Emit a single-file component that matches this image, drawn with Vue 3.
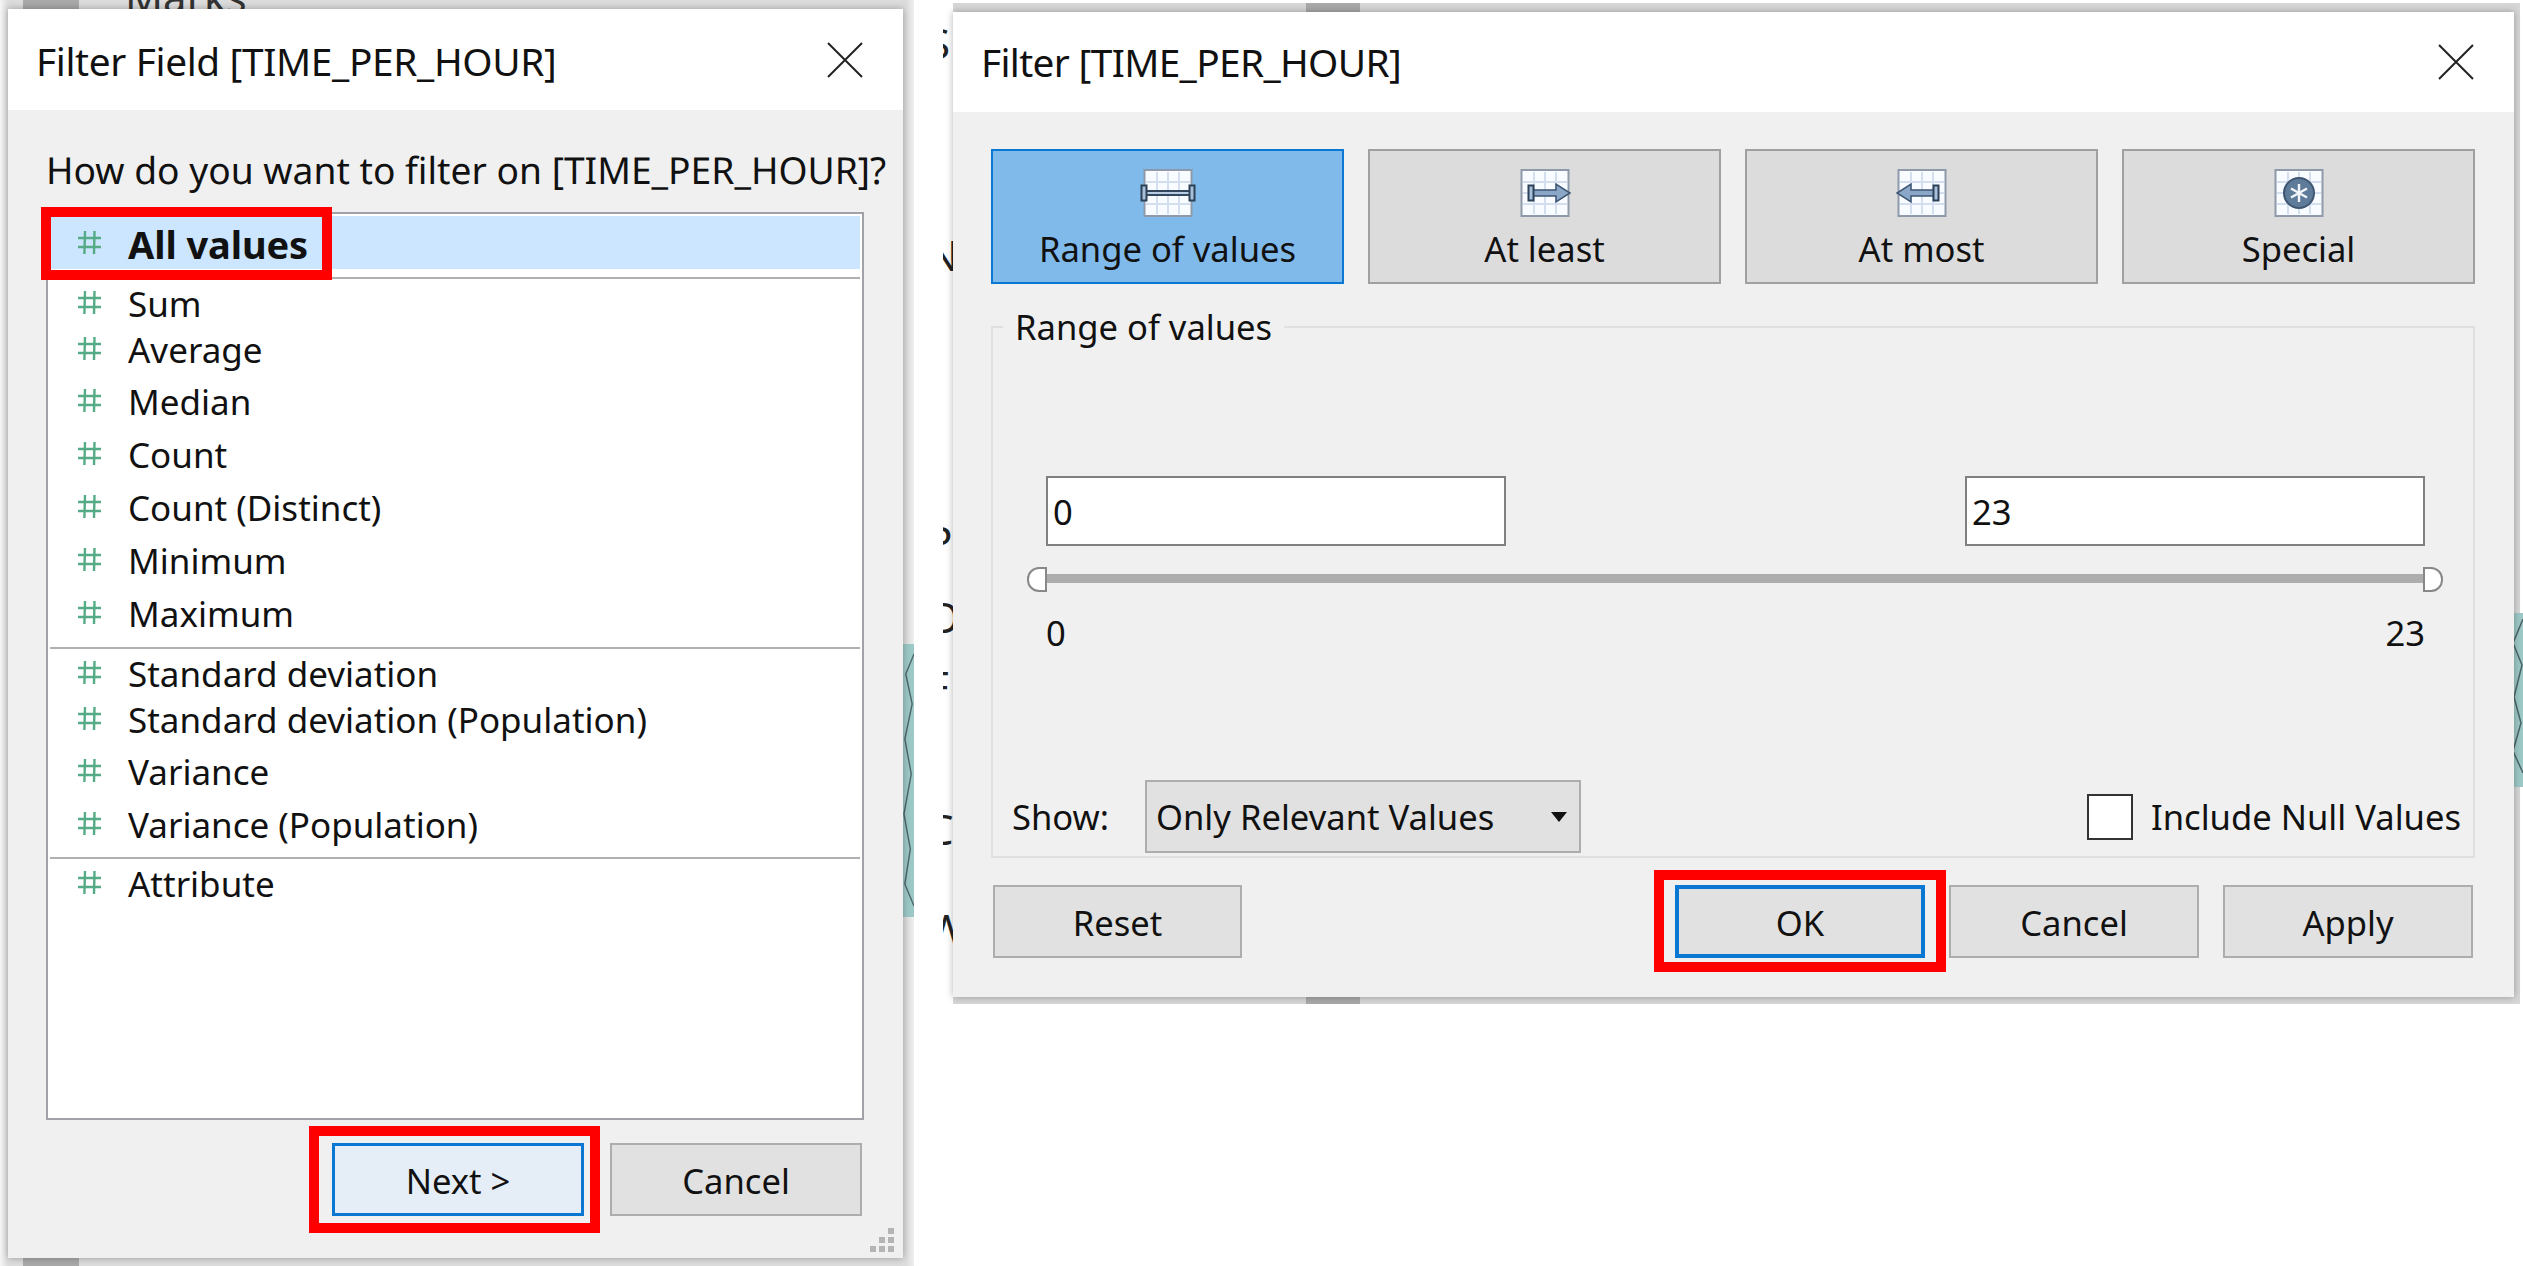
<script setup>
const grupos = [
  { clase: 'g-top', filas: [{ t: 'Sum', tight: true }, { t: 'Average', tight: true }, { t: 'Median' }, { t: 'Count' }, { t: 'Count (Distinct)' }, { t: 'Minimum' }, { t: 'Maximum' }] },
  { clase: 'g-mid', filas: [{ t: 'Standard deviation', tight: true }, { t: 'Standard deviation (Population)', tight: true }, { t: 'Variance' }, { t: 'Variance (Population)' }] },
  { clase: 'g-end', filas: [{ t: 'Attribute', tight: true }] }
]

const tabs = [
  { id: 'range', label: 'Range of values', activo: true },
  { id: 'least', label: 'At least' },
  { id: 'most', label: 'At most' },
  { id: 'special', label: 'Special' }
]

const fragmentos = [
  { t: 'S', y: 18 },
  { t: 'N', y: 230 },
  { t: 'P', y: 516 },
  { t: 'O', y: 592 },
  { t: 'F', y: 661 },
  { t: 'C', y: 804 },
  { t: 'W', y: 904 }
]
</script>

<template>
  <div class="page">
    <!-- lo que asoma detras de los dialogos -->
    <div class="backdrop">
      <div class="strip strip-left"></div>
      <div class="strip strip-right"></div>
      <div class="chip chip-a"></div>
      <div class="chip chip-b"></div>
      <div class="chip chip-c"></div>
      <div class="chip chip-d"></div>
      <div class="marks">Marks</div>
      <div class="sliver">
        <span v-for="f in fragmentos" :key="f.t" class="frag" :style="{ top: f.y + 'px' }">{{ f.t }}</span>
      </div>
      <svg class="map map-a" viewBox="0 0 12 273" preserveAspectRatio="none">
        <rect width="12" height="273" fill="#9cc8c6" />
        <path d="M12 10 3 30 10 60 2 95 9 130 1 170 8 205 2 240 12 262" stroke="#4d6468" stroke-width="1.500" fill="none" />
      </svg>
      <svg class="map map-b" viewBox="0 0 12 174" preserveAspectRatio="none">
        <rect width="12" height="174" fill="#9cc8c6" />
        <path d="M12 6 2 30 11 52 3 84 10 110 2 138 12 160" stroke="#4d6468" stroke-width="1.500" fill="none" />
      </svg>
    </div>

    <div class="dialog dialog-field">
      <header class="titlebar">
        <span class="title">Filter Field [TIME_PER_HOUR]</span>
        <svg class="close" viewBox="0 0 36 36"><path d="M1 1 35 35M35 1 1 35" stroke="#222" stroke-width="2" fill="none" /></svg>
      </header>
      <div class="field-body">
        <p class="question">How do you want to filter on [TIME_PER_HOUR]?</p>
        <div class="listbox">
          <div class="row row-selected">
            <svg class="hash" viewBox="0 0 23 23"><path d="M7 0 6.400 23M16.500 0 16 23M0 7H23M0 16H23" stroke="#55ab85" stroke-width="2.400" fill="none" /></svg>
            <b>All values</b>
          </div>
          <div v-for="g in grupos" :key="g.clase" class="group" :class="g.clase">
            <div v-for="f in g.filas" :key="f.t" class="row" :class="{ tight: f.tight }">
              <svg class="hash" viewBox="0 0 23 23"><path d="M7 0 6.400 23M16.500 0 16 23M0 7H23M0 16H23" stroke="#55ab85" stroke-width="2.400" fill="none" /></svg>
              <span>{{ f.t }}</span>
            </div>
          </div>
        </div>
        <div class="field-footer">
          <button class="btn btn-next">Next &gt;</button>
          <button class="btn btn-wide">Cancel</button>
        </div>
        <div class="grip">
          <i class="d13"></i>
          <i class="d22"></i>
          <i class="d23"></i>
          <i class="d31"></i>
          <i class="d32"></i>
          <i class="d33"></i>
        </div>
      </div>
    </div>

    <div class="dialog dialog-filter">
      <header class="titlebar titlebar-filter">
        <span class="title">Filter [TIME_PER_HOUR]</span>
        <svg class="close" viewBox="0 0 36 36"><path d="M1 1 35 35M35 1 1 35" stroke="#222" stroke-width="2" fill="none" /></svg>
      </header>
      <div class="filter-body">
        <div class="tabs">
          <div v-for="tab in tabs" :key="tab.id" class="tab" :class="{ activo: tab.activo }">
            <svg class="tab-icon" viewBox="0 0 56 48">
              <rect x="4.500" y="1" width="47" height="46" fill="#f8fbff" stroke="#8e9aaa" stroke-width="2" />
              <path d="M6 13H50M6 24H50M6 35H50M17 3V45M28 3V45M39 3V45" stroke="#d3deee" stroke-width="2" fill="none" />
              <template v-if="tab.id === 'range'">
                <path d="M6 24H50" stroke="#33475f" stroke-width="6" />
                <path d="M6 24H50" stroke="#b8cde4" stroke-width="2" />
                <rect x="1.500" y="16.500" width="5" height="15" fill="#a8c0da" stroke="#2d4158" stroke-width="2" />
                <rect x="49.500" y="16.500" width="5" height="15" fill="#a8c0da" stroke="#2d4158" stroke-width="2" />
              </template>
              <template v-else-if="tab.id === 'least'">
                <path d="M14 21H39V15L53 24 39 33V27H14Z" fill="#8aa7c8" stroke="#3e5672" stroke-width="1.500" />
                <rect x="11.500" y="16.500" width="5" height="15" fill="#a8c0da" stroke="#2d4158" stroke-width="2" />
              </template>
              <template v-else-if="tab.id === 'most'">
                <path d="M42 21H17V15L3 24 17 33V27H42Z" fill="#8aa7c8" stroke="#3e5672" stroke-width="1.500" />
                <rect x="39.500" y="16.500" width="5" height="15" fill="#a8c0da" stroke="#2d4158" stroke-width="2" />
              </template>
              <template v-else>
                <circle cx="28" cy="24" r="15" fill="#5e7c99" stroke="#3e5672" stroke-width="2" />
                <path d="M28 15V33M20 19.500 36 28.500M36 19.500 20 28.500" stroke="#f2f5f9" stroke-width="2.400" />
              </template>
            </svg>
            <span>{{ tab.label }}</span>
          </div>
        </div>

        <section class="range">
          <span class="legend">Range of values</span>
          <div class="range-body">
            <div class="inputs">
              <input class="num" type="text" value="0" />
              <input class="num" type="text" value="23" />
            </div>
            <div class="slider">
              <span class="handle handle-l"></span>
              <span class="track"></span>
              <span class="handle handle-r"></span>
            </div>
            <div class="ticks"><span>0</span><span>23</span></div>
          </div>
          <div class="show-row">
            <span class="show-label">Show:</span>
            <div class="combo">
              <span>Only Relevant Values</span>
              <span class="arrow"></span>
            </div>
            <label class="nulls">
              <span class="check"></span>
              <span>Include Null Values</span>
            </label>
          </div>
        </section>

        <div class="filter-footer">
          <button class="btn btn-reset">Reset</button>
          <div class="footer-right">
            <button class="btn btn-ok">OK</button>
            <button class="btn btn-std">Cancel</button>
            <button class="btn btn-std">Apply</button>
          </div>
        </div>
      </div>
    </div>
  </div>
</template>

<style scoped>
.page {
  position: relative;
  width: 2523px;
  height: 1266px;
  overflow: hidden;
  display: flex;
  align-items: flex-start;
  background: #fff;
  font-family: "Noto Sans", "Open Sans", sans-serif;
  font-size: 34.6px;
  color: #111;
}

.backdrop { position: absolute; inset: 0; }
.strip { position: absolute; background: #d6d6d6; }
.strip-left { left: 0; top: 0; width: 914px; height: 1266px; background: linear-gradient(90deg, #f6f6f6 0, #dcdcdc 8px, #dcdcdc 906px, #eeeeee 914px); }
.strip-right { left: 943px; top: 3px; width: 1577px; height: 1001px; }
.chip { position: absolute; background: #a9a9a9; }
.chip-a { left: 23px; top: 0; width: 56px; height: 9px; }
.chip-b { left: 23px; top: 1258px; width: 56px; height: 8px; }
.chip-c { left: 1306px; top: 3px; width: 54px; height: 9px; }
.chip-d { left: 1306px; top: 997px; width: 54px; height: 7px; }
.marks { position: absolute; left: 125px; top: -28px; font-size: 42px; line-height: 50px; color: #333; }
.sliver { position: absolute; left: 943px; top: 0; width: 10px; height: 1010px; overflow: hidden; background: #fff; }
.frag { position: absolute; left: -16px; font-size: 42px; line-height: 50px; color: #222; }
.map { position: absolute; }
.map-a { left: 903px; top: 644px; width: 11px; height: 273px; }
.map-b { left: 2511px; top: 613px; width: 12px; height: 174px; }

.dialog {
  position: relative;
  display: flex;
  flex-direction: column;
  flex: none;
  background: #f0f0f0;
  box-shadow: 0 0 7px rgba(0, 0, 0, 0.3);
}
.dialog-field { width: 895px; height: 1249px; margin: 9px 0 0 8px; }
.dialog-filter { width: 1561px; height: 985px; margin: 12px 0 0 50px; }

.titlebar {
  flex: none;
  display: flex;
  align-items: center;
  justify-content: space-between;
  height: 101px;
  padding: 0 40px 0 28px;
  background: #fff;
}
.titlebar-filter { height: 100px; }
.title { padding-top: 3px; font-size: 38.8px; letter-spacing: -0.35px; }
.titlebar-filter .title { padding-top: 0; letter-spacing: -0.65px; }
.close { width: 36px; height: 36px; }

.field-body { position: relative; flex: 1; padding: 35px 39px 0 38px; }
.question { margin: 0; height: 67px; line-height: 50px; font-size: 37.2px; text-rendering: geometricPrecision; white-space: nowrap; }

.listbox {
  box-sizing: border-box;
  height: 908px;
  padding: 2px;
  background: #fff;
  border: 2px solid #a0a2a8;
}
.row {
  display: flex;
  align-items: center;
  height: 53px;
  padding-left: 28px;
  font-size: 35px;
}
.row span, .row b { padding-top: 2px; }
.row .hash { margin-right: 27px; }
.hash { flex: none; width: 23px; height: 23px; }
.row.tight { height: 46px; }
.row-selected { position: relative; background: #cce6ff; }
.row-selected b { font-size: 38px; letter-spacing: -0.1px; }
/* recuadro rojo sobre la fila */
.row-selected::after {
  content: "";
  position: absolute;
  left: -9px;
  top: -9px;
  width: 291px;
  height: 73px;
  box-sizing: border-box;
  border: 10px solid #f00;
}
.group { border-top: 2px solid #b0b0b0; }
.g-top { margin-top: 8px; padding-bottom: 8px; }
.g-mid { padding-bottom: 7px; }
.g-top .row.tight + .row:not(.tight) { margin-top: 3px; }
.g-mid .row.tight + .row:not(.tight) { margin-top: 3px; }

.field-footer { display: flex; justify-content: flex-end; gap: 26px; margin: 23px 2px 0 0; }

.btn {
  box-sizing: border-box;
  height: 73px;
  background: #e1e1e1;
  border: 2px solid #adadad;
  color: #111;
  font: inherit;
  padding: 2px 0 0;
}
.btn-wide { width: 252px; }
.btn-next {
  position: relative;
  width: 252px;
  background: #e5eef7;
  border: 3px solid #0a78d2;
}
.btn-next::after {
  content: "";
  position: absolute;
  inset: -20px -19px -20px -26px;
  border: 10px solid #f00;
}

.grip {
  position: absolute;
  right: 9px;
  bottom: 6px;
  display: grid;
  grid-template-columns: repeat(3, 6px);
  grid-template-rows: repeat(3, 6px);
  gap: 3px;
}
.grip i { background: #b4b4b4; }
.d13 { grid-area: 1 / 3; }
.d22 { grid-area: 2 / 2; }
.d23 { grid-area: 2 / 3; }
.d31 { grid-area: 3 / 1; }
.d32 { grid-area: 3 / 2; }
.d33 { grid-area: 3 / 3; }

.filter-body { flex: 1; padding: 37px 39px 0 38px; }
.tabs { display: flex; gap: 24px; }
.tab {
  box-sizing: border-box;
  display: flex;
  flex-direction: column;
  align-items: center;
  width: 353px;
  height: 135px;
  padding-top: 18px;
  background: #dcdcdc;
  border: 2px solid #a0a0a0;
}
.tab span { margin-top: 8px; line-height: 48px; }
.tab.activo { background: #7fbaeb; border-color: #0a78d2; }
.tab-icon { flex: none; width: 56px; height: 48px; }

.range {
  position: relative;
  box-sizing: border-box;
  display: flex;
  flex-direction: column;
  height: 532px;
  margin-top: 42px;
  border: 2px solid #e0e0e0;
}
.legend {
  position: absolute;
  left: 10px;
  top: -24px;
  padding: 0 12px;
  line-height: 46px;
  background: #f0f0f0;
}
.range-body { padding: 148px 30px 0 34px; }
.inputs { display: flex; justify-content: space-between; margin: 0 18px 0 19px; }
.num {
  box-sizing: border-box;
  width: 460px;
  height: 70px;
  padding: 0 5px;
  background: #fff;
  border: 2px solid #808080;
  outline: none;
  color: #111;
  font: inherit;
}
.slider { display: flex; align-items: center; height: 25px; margin-top: 21px; }
.track { flex: 1; height: 9px; margin-top: -3px; background: #adadad; }
.handle { box-sizing: border-box; flex: none; width: 20px; height: 25px; background: #fff; border: 2px solid #888; }
.handle-l { border-radius: 12px 0 0 12px; }
.handle-r { border-radius: 0 12px 12px 0; }
.ticks { display: flex; justify-content: space-between; margin: 21px 18px 0 19px; line-height: 40px; }

.show-row { display: flex; align-items: center; margin-top: auto; padding: 0 12px 3px 19px; }
.show-label { width: 133px; flex: none; }
.combo {
  box-sizing: border-box;
  display: flex;
  align-items: center;
  justify-content: space-between;
  width: 436px;
  height: 73px;
  padding: 0 12px 0 9px;
  background: #e1e1e1;
  border: 2px solid #adadad;
}
.arrow {
  width: 0;
  height: 0;
  border-left: 8px solid transparent;
  border-right: 8px solid transparent;
  border-top: 10px solid #111;
}
.nulls { display: flex; align-items: center; gap: 18px; margin-left: auto; }
.check { box-sizing: border-box; width: 46px; height: 46px; background: #fff; border: 2px solid #333; }

.filter-footer { display: flex; justify-content: space-between; margin: 27px 2px 0 2px; }
.footer-right { display: flex; gap: 24px; }
.btn-reset { width: 249px; }
.btn-std { width: 250px; }
.btn-ok {
  position: relative;
  width: 250px;
  border: 4px solid #0a78d2;
}
.btn-ok::after {
  content: "";
  position: absolute;
  inset: -19px -25px -18px -25px;
  border: 10px solid #f00;
}
</style>
